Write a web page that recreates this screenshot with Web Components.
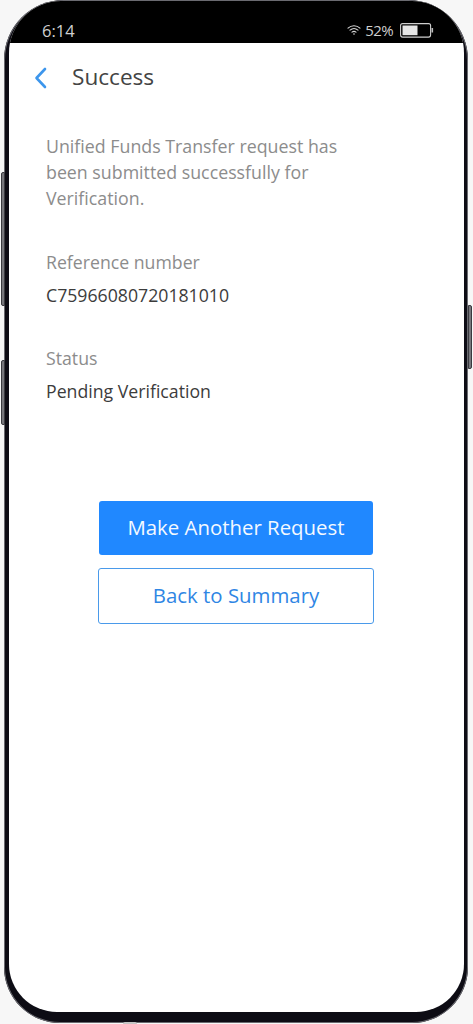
<!DOCTYPE html>
<html lang="en"><head><meta charset="utf-8"><title>Success</title>
<style>
html,body{margin:0;padding:0;height:1024px;overflow:hidden;background:#f7f7f7;font-family:"Open Sans","Noto Sans",sans-serif}
</style></head><body>
<phone-frame>
  <status-bar slot="status" time="6:14" battery="52%"></status-bar>
  <app-header title="Success"></app-header>
  <main-content>
    <p-message>Unified Funds Transfer request has been submitted successfully for Verification.</p-message>
    <info-field label="Reference number" value="C75966080720181010"></info-field>
    <info-field label="Status" value="Pending Verification"></info-field>
    <button-stack>
      <action-button kind="primary">Make Another Request</action-button>
      <action-button kind="outline">Back to Summary</action-button>
    </button-stack>
  </main-content>
</phone-frame>
<script>
function def(name, html, init){
  customElements.define(name, class extends HTMLElement{
    constructor(){super();this.attachShadow({mode:'open'}).innerHTML=html;}
    connectedCallback(){ if(init) init(this,this.shadowRoot); }
  });
}
def('phone-frame',`<style>
:host{display:block;position:relative;box-sizing:border-box;width:464px;height:1023px;margin-left:4px;background:#0d0c14;border-radius:60px 60px 56px 56px;padding:1px 4px 11px 5px;box-shadow:inset 0 0 0 1px #6a6a70}
.screen{position:relative;height:100%;display:flex;flex-direction:column;background:#fff;border-radius:52px 52px 48px 48px;overflow:hidden}
.key{position:absolute;width:4px;background:#77777c;border:1px solid #3a3a40;box-sizing:border-box}
.k1{left:-3px;top:172px;height:134px;border-radius:2px 0 0 2px}
.k2{left:-3px;top:360px;height:65px;border-radius:2px 0 0 2px}
.k3{right:-4px;top:305px;height:64px;border-radius:0 2px 2px 0}
.home{position:absolute;left:119px;bottom:-1px;width:14px;height:2px;background:#c4c4c4;border-radius:2px 2px 0 0}
</style><span class="key k1"></span><span class="key k2"></span><span class="key k3"></span>
<div class="screen"><slot name="status"></slot><slot></slot></div><span class="home"></span>`);
def('status-bar',`<style>
:host{display:flex;align-items:center;flex:none;box-sizing:border-box;height:42px;padding:16px 30px 0 33px;background:#000;color:#cfcfcf;font-size:16.5px}
.time{flex:1}
.pct{margin:0 7px 0 4px;font-size:15px;letter-spacing:-.6px}
svg{display:block}
</style><span class="time"></span>
<svg width="14" height="12" viewBox="0 0 14 12" fill="none" stroke="#d6d6d6" stroke-width="1.1" stroke-linecap="round"><path d="M1 4.2C4.5 1 9.5 1 13 4.2"/><path d="M3 6.2C5.4 4.2 8.6 4.2 11 6.2"/><path d="M5 8.1C6.2 7.2 7.8 7.2 9 8.1"/><circle cx="7" cy="10" r=".8" fill="#d6d6d6" stroke="none"/></svg>
<span class="pct"></span>
<svg width="34" height="15" viewBox="0 0 34 15"><rect x=".6" y=".6" width="30" height="13.5" rx="2" fill="none" stroke="#cfcfcf" stroke-width="1.1"/><rect x="2.5" y="2.5" width="15" height="9.7" fill="#e6e6e6"/><rect x="31.5" y="5" width="1.6" height="4.5" fill="#bdbdbd"/></svg>`,
(el,r)=>{r.querySelector('.time').textContent=el.getAttribute('time');r.querySelector('.pct').textContent=el.getAttribute('battery');});
def('app-header',`<style>
:host{display:flex;align-items:center;flex:none;height:67px;padding:0 0 0 24px;color:#444;font-size:22.6px;box-sizing:border-box}
svg{display:block;margin:2px 24px 0 0}
</style><svg width="15" height="22" viewBox="0 0 15 22" fill="none" stroke="#3d96ec" stroke-width="2.6" stroke-linecap="round" stroke-linejoin="round"><path d="M12 2 3.5 11 12 20"/></svg><span></span>`,
(el,r)=>{r.querySelector('span').textContent=el.getAttribute('title');});
def('main-content',`<style>
:host{display:block;padding:23px 37px 0 37px;}
</style><slot></slot>`);
def('p-message',`<style>
:host{display:block;color:#8c8c8c;font-size:17.8px;line-height:26px;margin-bottom:38px;max-width:310px}
</style><slot></slot>`);
def('info-field',`<style>
:host{display:block;margin-bottom:37px;font-size:17.7px;line-height:26px}
.l{color:#8c8c8c;margin-bottom:7px}
.v{color:#3c3c3c}
</style><div class="l"></div><div class="v"></div>`,
(el,r)=>{r.querySelector('.l').textContent=el.getAttribute('label');r.querySelector('.v').textContent=el.getAttribute('value');});
def('button-stack',`<style>
:host{display:flex;flex-direction:column;align-items:center;gap:13px;margin-top:97px;margin-left:-1px}
</style><slot></slot>`);
def('action-button',`<style>
:host{display:flex;align-items:center;justify-content:center;box-sizing:border-box;font-size:20.4px;border-radius:3px;padding-bottom:3px}
:host([kind=primary]){width:274px;height:54px;background:#2088ff;color:#f4f9ff}
:host([kind=outline]){width:276px;height:56px;background:#fff;color:#2f86e4;border:1.5px solid #4a9aea}
</style><slot></slot>`);
</script>
</body></html>
